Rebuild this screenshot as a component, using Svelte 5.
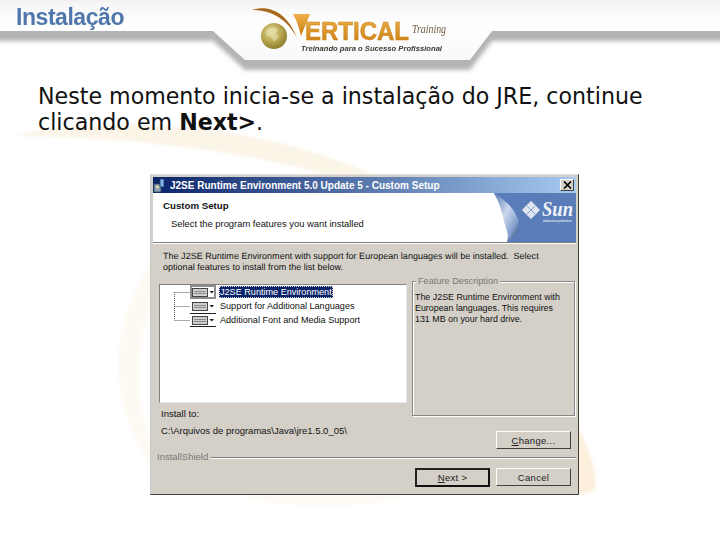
<script>
  const rows = [
    { label: 'J2SE Runtime Environment', kind: 'selected' },
    { label: 'Support for Additional Languages', kind: 'plain' },
    { label: 'Additional Font and Media Support', kind: 'last' }
  ];
</script>

<div class="slide">
  <svg class="backdrop" width="720" height="540" viewBox="0 0 720 540" aria-hidden="true">
    <defs>
      <linearGradient id="top" x1="0" y1="0" x2="0" y2="1">
        <stop offset="0" stop-color="#dedede" />
        <stop offset="0.18" stop-color="#f6f6f6" />
        <stop offset="0.5" stop-color="#ffffff" />
        <stop offset="1" stop-color="#f8f8f8" />
      </linearGradient>
      <filter id="soft"><feGaussianBlur stdDeviation="2.2" /></filter>
      <filter id="softer"><feGaussianBlur stdDeviation="1.5" /></filter>
      <filter id="edge"><feGaussianBlur stdDeviation="0.7" /></filter>
    </defs>
    <path d="M14 136C80 120 230 112 372 174L350 182C250 148 100 136 14 136Z" fill="#fbf5e8" filter="url(#softer)" />
    <path d="M152 262C106 330 102 415 172 492C130 420 128 340 166 268Z" fill="#fdfaf3" filter="url(#softer)" />
    <path d="M572 415C590 450 597 470 595 490L574 496Z" fill="#fcefdc" filter="url(#softer)" />
    <path d="M240 496Q320 516 410 496Z" fill="#fdfaf3" filter="url(#softer)" />
    <path d="M-9 9H729V41H492L470 70H245L213 41H-9Z" fill="#b4b4b4" filter="url(#soft)" />
    <path d="M-9 -9H729V31H492L470 60H245L213 31H-9Z" fill="url(#top)" filter="url(#edge)" />
  </svg>

  <header class="top">
    <h1>Instalação</h1>
    <svg class="logo" width="210" height="60" viewBox="0 0 210 60" role="img" aria-label="Vertical Training">
      <defs>
        <radialGradient id="globe" cx="0.4" cy="0.35" r="0.75">
          <stop offset="0" stop-color="#e4dc9c" />
          <stop offset="0.55" stop-color="#b3a14a" />
          <stop offset="1" stop-color="#7f7426" />
        </radialGradient>
        <linearGradient id="gold" x1="0" y1="0" x2="0" y2="1">
          <stop offset="0" stop-color="#eeb04a" />
          <stop offset="1" stop-color="#c97c12" />
        </linearGradient>
      </defs>
      <circle cx="24" cy="36" r="13" fill="url(#globe)" />
      <path d="M16 30l7-3 5 2-2 4 3 4-5 5-3-5-5-2Z" fill="#eee6b4" opacity=".55" />
      <path d="M2 10C20 4 38 14 47 38C38 20 22 10 2 10Z" fill="#a8691c" />
      <path d="M43 14H60L51 36C49 28 47 21 43 14Z" fill="url(#gold)" />
      <text class="brand" x="55" y="40" textLength="104" lengthAdjust="spacingAndGlyphs" fill="url(#gold)" stroke="#d08a20" stroke-width=".6">ERTICAL</text>
      <text class="sub" x="162" y="33" textLength="34" lengthAdjust="spacingAndGlyphs">Training</text>
      <text class="tag" x="51" y="51" textLength="141" lengthAdjust="spacingAndGlyphs">Treinando para o Sucesso Profissional</text>
    </svg>
  </header>

  <p class="lead">Neste momento inicia-se a instalação do JRE, continue clicando em <b>Next&gt;</b>.</p>

  <section class="dialog">
    <div class="title">
      <svg width="15" height="15" viewBox="0 0 15 15" aria-hidden="true">
        <rect x="1" y="6" width="7" height="8" fill="#8aa2b8" stroke="#33475c" stroke-width=".8" />
        <rect x="7" y="1" width="4" height="8" fill="#7fb2e8" stroke="#1c3a66" stroke-width=".8" />
        <rect x="3" y="8" width="3" height="2" fill="#e8d890" />
      </svg>
      <span class="title-text">J2SE Runtime Environment 5.0 Update 5 - Custom Setup</span>
      <span class="close">
        <svg width="9" height="8" viewBox="0 0 9 8" aria-hidden="true"><path d="M1 0.5L8 7.5M8 0.5L1 7.5" stroke="#000" stroke-width="1.6" /></svg>
      </span>
    </div>

    <div class="banner">
      <div class="banner-copy">
        <h2>Custom Setup</h2>
        <p>Select the program features you want installed</p>
      </div>
      <svg class="sun" width="84" height="49" viewBox="0 0 84 49" role="img" aria-label="Sun Microsystems">
        <defs>
          <linearGradient id="curl" x1="0" y1="0" x2="1" y2="1">
            <stop offset="0" stop-color="#5c7cb8" />
            <stop offset="0.45" stop-color="#cbd8ee" />
            <stop offset="0.75" stop-color="#86a2d0" />
            <stop offset="1" stop-color="#2f4068" />
          </linearGradient>
        </defs>
        <path d="M2 0H84V49H15C18 40 14 20 2 0Z" fill="#5a7cb8" />
        <path d="M2 0C14 8 22 14 27 29C27 36 22 42 17 47C15 38 14 34 12 29C10 18 7 9 2 0Z" fill="url(#curl)" />
        <path d="M39 8L48 17L39 26L30 17Z" fill="#dfe6f2" stroke="#a9bad8" stroke-width=".8" />
        <path d="M35 13L43 21M43 13L35 21" stroke="#8ba2c8" />
        <text class="sun-word" x="50" y="23" textLength="31" lengthAdjust="spacingAndGlyphs">Sun</text>
        <text class="sun-small" x="51" y="29" textLength="29" lengthAdjust="spacingAndGlyphs">microsystems</text>
      </svg>
    </div>

    <div class="body">
      <p class="desc">The J2SE Runtime Environment with support for European languages will be installed.  Select<br />optional features to install from the list below.</p>

      <div class="columns">
        <div class="left">
          <div class="tree">
            <svg class="lines" width="30" height="42" viewBox="0 0 30 42" aria-hidden="true">
              <path d="M14.500 7V35M14.500 7.500H30M14.500 21.500H30M14.500 35.500H30" fill="none" stroke="#555" stroke-dasharray="1 1" />
            </svg>
            <ul>
              {#each rows as row}
                <li>
                  <span class="pick {row.kind}">
                    <svg width="22" height="9" viewBox="0 0 22 9" aria-hidden="true">
                      <rect x="0.500" y="0.500" width="15" height="8" fill="#cfcfcf" stroke="#444" />
                      <path d="M2 3.500H14M2 5.500H14" stroke="#8a8a8a" />
                      <path d="M17.500 3H22L19.750 5.500Z" fill="#222" />
                    </svg>
                  </span>
                  <span class="name" class:on={row.kind === 'selected'}>{row.label}</span>
                </li>
              {/each}
            </ul>
          </div>
          <p class="to">Install to:</p>
          <p class="path">C:\Arquivos de programas\Java\jre1.5.0_05\</p>
        </div>

        <div class="right">
          <div class="group">
            <span class="legend">Feature Description</span>
            <p>The J2SE Runtime Environment with European languages. This requires 131 MB on your hard drive.</p>
          </div>
          <button class="btn change" type="button"><u>C</u>hange...</button>
        </div>
      </div>

      <div class="shield"><span>InstallShield</span><i></i></div>

      <div class="actions">
        <button class="btn default" type="button"><u>N</u>ext &gt;</button>
        <button class="btn" type="button">Cancel</button>
      </div>
    </div>
  </section>
</div>

<style>
  :global(body) {
    margin: 0;
    background: #fff;
  }
  .slide {
    position: relative;
    width: 720px;
    height: 540px;
    overflow: hidden;
    background: #fff;
  }
  .backdrop {
    position: absolute;
    inset: 0;
  }
  .top {
    position: relative;
    height: 83px;
  }
  h1 {
    margin: 0;
    padding: 4px 0 0 16px;
    font: 700 23px/26px "Liberation Sans", sans-serif;
    letter-spacing: -0.45px;
    color: #5077ac;
    filter: blur(0.3px);
  }
  .logo {
    position: absolute;
    left: 250px;
    top: 0;
    filter: blur(0.35px);
  }
  .brand {
    font: 700 25px "Liberation Sans", sans-serif;
  }
  .sub {
    font: italic 400 13px "Liberation Serif", serif;
    fill: #6b5a3a;
  }
  .tag {
    font: italic 700 8px "Liberation Sans", sans-serif;
    fill: #3a3a30;
  }
  .lead {
    position: relative;
    width: 640px;
    margin: 0 0 0 38px;
    font: 400 22.150px/26px "DejaVu Sans", sans-serif;
    color: #111;
  }
  .dialog {
    position: relative;
    box-sizing: border-box;
    width: 429px;
    height: 321px;
    margin: 39px 0 0 150px;
    padding: 2px 2px 0 2px;
    background: #d4d0c8;
    border: 1px solid;
    border-color: #e0e0dc #3c3c3c #3c3c3c #c8c8c4;
    font: 400 9.500px/11px "Liberation Sans", sans-serif;
    color: #111;
  }
  .title {
    display: flex;
    align-items: center;
    height: 16px;
    background: linear-gradient(90deg, #0a246a, #a6caf0);
  }
  .title svg {
    flex: none;
  }
  .title-text {
    margin-left: 2px;
    font: 700 10px/15px "Liberation Sans", sans-serif;
    color: #fff;
    white-space: nowrap;
  }
  .close {
    display: flex;
    align-items: center;
    justify-content: center;
    box-sizing: border-box;
    width: 14px;
    height: 12px;
    margin: 0 2px 0 auto;
    background: #d4d0c8;
    border: 1px solid;
    border-color: #fff #404040 #404040 #fff;
  }
  .close svg {
    width: 9px;
  }
  .banner {
    display: flex;
    justify-content: space-between;
    box-sizing: border-box;
    height: 50px;
    background: #fff;
    border-bottom: 1px solid #808080;
  }
  .banner-copy {
    padding: 7px 0 0 10px;
  }
  h2 {
    margin: 0;
    font: 700 9.700px/11px "Liberation Sans", sans-serif;
  }
  .banner-copy p {
    margin: 7px 0 0 8px;
    font-size: 9.400px;
  }
  .sun {
    flex: none;
  }
  .sun-word {
    font: italic 700 20px "Liberation Serif", serif;
    fill: #eef2fa;
  }
  .sun-small {
    font: 700 3.500px "Liberation Sans", sans-serif;
    fill: #dfe6f2;
  }
  .body {
    padding: 8px 0 0 6px;
    box-shadow: inset 0 1px 0 #fff;
  }
  .desc {
    margin: 0 0 0 4px;
    font-size: 9.060px;
    text-rendering: geometricPrecision;
    white-space: pre-wrap;
  }
  .columns {
    display: flex;
    gap: 5px;
    margin-top: 8px;
  }
  .left {
    width: 248px;
    padding-top: 3px;
  }
  .tree {
    display: flex;
    box-sizing: border-box;
    height: 119px;
    background: #fff;
    border: 1px solid;
    border-color: #808080 #e8e8e8 #e8e8e8 #808080;
  }
  .lines {
    flex: none;
  }
  ul {
    margin: 0;
    padding: 0;
    list-style: none;
  }
  li {
    display: flex;
    align-items: center;
    height: 14px;
    font-size: 9.100px;
    white-space: nowrap;
  }
  .pick {
    display: flex;
    align-items: center;
    justify-content: center;
    box-sizing: border-box;
    width: 26px;
    height: 14px;
    margin-right: 3px;
    background: #fff;
  }
  .pick svg {
    flex: none;
  }
  .pick.selected {
    border: 2px solid #8c8c8c;
  }
  .pick.last {
    border-top: 1px solid #222;
    border-bottom: 1px solid #222;
  }
  .name {
    padding: 0 1px;
    line-height: 12px;
  }
  .name.on {
    background: #0a246a;
    color: #fff;
    outline: 1px dotted #d4d0c8;
    outline-offset: -1px;
  }
  .to {
    margin: 5px 0 0 2px;
  }
  .path {
    margin: 6px 0 0 2px;
  }
  .right {
    display: flex;
    flex-direction: column;
    align-items: flex-end;
    width: 164px;
  }
  .group {
    position: relative;
    box-sizing: border-box;
    width: 163px;
    height: 135px;
    margin-right: 1px;
    padding: 10px 9px 0 2px;
    border: 1px solid #888;
    box-shadow: 1px 1px 0 #fff, inset 1px 1px 0 #fff;
    font-size: 8.900px;
  }
  .legend {
    position: absolute;
    top: -6px;
    left: 3px;
    padding: 0 2px;
    background: #d4d0c8;
    color: #777;
    font-size: 9.200px;
  }
  .group p {
    margin: 0;
  }
  .btn {
    box-sizing: border-box;
    width: 75px;
    height: 18px;
    padding: 0;
    background: #d4d0c8;
    border: 1px solid;
    border-color: #fff #404040 #404040 #fff;
    font: 400 9.500px/11px "Liberation Sans", sans-serif;
    letter-spacing: 0.3px;
    color: #222;
  }
  .change {
    margin: 15px 5px 0 0;
  }
  .shield {
    display: flex;
    align-items: center;
    gap: 3px;
    height: 12px;
    margin: 1px 0 0 -2px;
    color: #777;
  }
  .shield i {
    flex: 1;
    height: 1px;
    margin-top: 3px;
    background: #808080;
    box-shadow: 0 1px 0 #fff;
  }
  .actions {
    display: flex;
    justify-content: flex-end;
    gap: 6px;
    margin: 6px 5px 0 0;
  }
  .default {
    height: 19px;
    border: 2px solid #111;
    border-color: #222 #111 #111 #222;
  }
</style>
